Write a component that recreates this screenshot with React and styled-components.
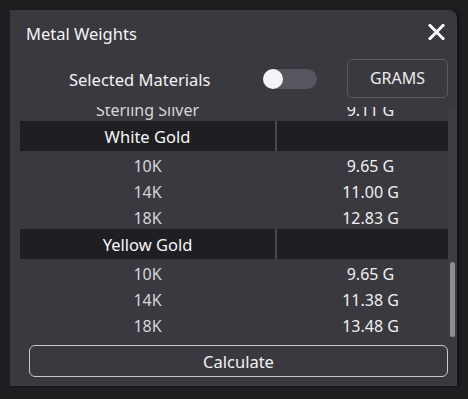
import React, { useEffect, useRef, useState } from 'react'
import styled, { createGlobalStyle } from 'styled-components'

const GlobalStyle = createGlobalStyle`
  html, body {
    margin: 0;
    padding: 0;
    background: #1f1f21;
  }
  body {
    font-family: "Noto Sans", "Open Sans", sans-serif;
    color: #f2f2f2;
  }
`;

const Page = styled.div`
  width: 468px;
  height: 399px;
  padding: 10px 11px 13px 10px;
  box-sizing: border-box;
`;

const Panel = styled.div`
  height: 100%;
  background: #3a393f;
  border-top-right-radius: 8px;
  box-shadow: 1px 1px 0 #141416, 3px 0 3px rgba(0, 0, 0, 0.35);
  display: flex;
  flex-direction: column;
  padding: 0 0 0 10px;
  box-sizing: border-box;
`;

const TitleBar = styled.div`
  height: 44px;
  display: flex;
  align-items: center;
  justify-content: space-between;
  padding: 0 12px 0 6px;
`;

const Title = styled.div`
  font-size: 16.5px;
  color: #f4f4f4;
  padding-top: 2px;
`;

const CloseButton = styled.button`
  border: none;
  background: none;
  padding: 0;
  width: 18px;
  height: 18px;
  display: flex;
  align-items: center;
  justify-content: center;
  cursor: pointer;
`;

const Controls = styled.div`
  height: 48px;
  display: flex;
  align-items: center;
  padding: 0 9px 0 49px;
`;

const Label = styled.div`
  font-size: 16.5px;
  color: #f2f2f2;
  width: 194px;
  flex-shrink: 0;
  padding-top: 3px;
`;

const Track = styled.div`
  width: 54px;
  height: 20px;
  flex-shrink: 0;
  border-radius: 10px;
  background: #57565f;
  position: relative;
  margin: 2px 30px 0 0;
  cursor: pointer;
`;

const Knob = styled.div`
  position: absolute;
  top: 0;
  left: ${p => (p.on ? '34px' : '0')};
  width: 20px;
  height: 20px;
  border-radius: 50%;
  background: #f5f5f9;
`;

const UnitButton = styled.button`
  width: 101px;
  height: 39px;
  flex-shrink: 0;
  border: 1px solid #5a595f;
  border-radius: 5px;
  background: transparent;
  color: #ececec;
  font-family: inherit;
  font-size: 16px;
  padding: 0;
`;

const ScrollArea = styled.div`
  height: 230px;
  margin-top: 5px;
  display: flex;
`;

const Scroller = styled.div`
  flex: 1;
  overflow-y: scroll;
  scrollbar-width: none;
  &::-webkit-scrollbar {
    display: none;
  }
`;

const ScrollTrack = styled.div`
  width: 9px;
  background: #3e3d43;
  display: flex;
  flex-direction: column;
  align-items: center;
`;

const Thumb = styled.div`
  width: 5px;
  border-radius: 3px;
  background: #8d8c92;
`;

const Table = styled.div`
  display: flex;
  flex-direction: column;
`;

const Header = styled.div`
  display: grid;
  grid-template-columns: 255px 2px 1fr;
  height: 30px;
  background: #1f1e22;
`;

const HeaderCell = styled.div`
  display: flex;
  align-items: center;
  justify-content: center;
  font-size: 16.5px;
  color: #f6f6f6;
  padding-top: 1px;
`;

const Divider = styled.div`
  background: #4a4950;
`;

const Row = styled.div`
  display: grid;
  grid-template-columns: 255px 1fr;
  height: 26px;
  align-items: center;
`;

const Cell = styled.div`
  text-align: center;
  font-size: 16px;
  color: ${p => (p.value ? '#f0f0f0' : '#d6d6d8')};
  padding-left: ${p => (p.value ? '18px' : '0')};
  padding-top: 4px;
`;

const Footer = styled.div`
  padding: 8px 9px 9px 9px;
`;

const CalcButton = styled.button`
  width: 100%;
  height: 32px;
  border: 1.5px solid #c9c9cc;
  border-radius: 6px;
  background: transparent;
  color: #f2f2f2;
  font-family: inherit;
  font-size: 16.5px;
  padding: 0;
`;

const groups = [
  { name: 'Platinum', rows: [['950 Platinum', '18.46 G'], ['900 Platinum', '18.81 G']] },
  { name: 'Palladium', rows: [['950 Palladium', '10.42 G'], ['500 Palladium', '10.91 G']] },
  { name: 'Titanium', rows: [['Grade 5', '3.90 G']] },
  { name: 'Cobalt Chrome', rows: [['CoCr', '7.39 G']] },
  { name: 'Rose Gold', rows: [['10K', '10.02 G'], ['14K', '11.47 G'], ['18K', '13.19 G']] },
  { name: 'Silver', rows: [['Fine Silver', '9.23 G'], ['Argentium', '9.04 G'], ['Sterling Silver', '9.11 G']] },
  { name: 'White Gold', rows: [['10K', '9.65 G'], ['14K', '11.00 G'], ['18K', '12.83 G']] },
  { name: 'Yellow Gold', rows: [['10K', '9.65 G'], ['14K', '11.38 G'], ['18K', '13.48 G']] },
];

function CloseIcon() {
  return (
    <svg width="17" height="16" viewBox="0 0 17 16">
      <path d="M2 1.5 L15 14.5 M15 1.5 L2 14.5" stroke="#ffffff" strokeWidth="3" strokeLinecap="square" />
    </svg>
  );
}

export default function App() {
  const scrollRef = useRef(null);
  const [selected, setSelected] = useState(false);
  const [thumb, setThumb] = useState({ top: 0, height: 0 });

  const updateThumb = () => {
    const el = scrollRef.current;
    if (!el) return;
    const h = el.clientHeight;
    const ratio = h / el.scrollHeight;
    setThumb({ top: el.scrollTop * ratio, height: h * ratio });
  };

  useEffect(() => {
    if (scrollRef.current) {
      scrollRef.current.scrollTop = scrollRef.current.scrollHeight;
    }
    updateThumb();
  }, []);

  return (
    <Page>
      <GlobalStyle />
      <Panel>
        <TitleBar>
          <Title>Metal Weights</Title>
          <CloseButton aria-label="Close">
            <CloseIcon />
          </CloseButton>
        </TitleBar>
        <Controls>
          <Label>Selected Materials</Label>
          <Track onClick={() => setSelected(!selected)}>
            <Knob on={selected ? 1 : 0} />
          </Track>
          <UnitButton>GRAMS</UnitButton>
        </Controls>
        <ScrollArea>
          <Scroller ref={scrollRef} onScroll={updateThumb}>
            <Table>
              {groups.map(g => (
                <React.Fragment key={g.name}>
                  <Header>
                    <HeaderCell>{g.name}</HeaderCell>
                    <Divider />
                    <HeaderCell />
                  </Header>
                  {g.rows.map(([k, v]) => (
                    <Row key={k}>
                      <Cell>{k}</Cell>
                      <Cell value={1}>{v}</Cell>
                    </Row>
                  ))}
                </React.Fragment>
              ))}
            </Table>
          </Scroller>
          <ScrollTrack>
            <Thumb style={{ marginTop: thumb.top, height: thumb.height }} />
          </ScrollTrack>
        </ScrollArea>
        <Footer>
          <CalcButton>Calculate</CalcButton>
        </Footer>
      </Panel>
    </Page>
  );
}
